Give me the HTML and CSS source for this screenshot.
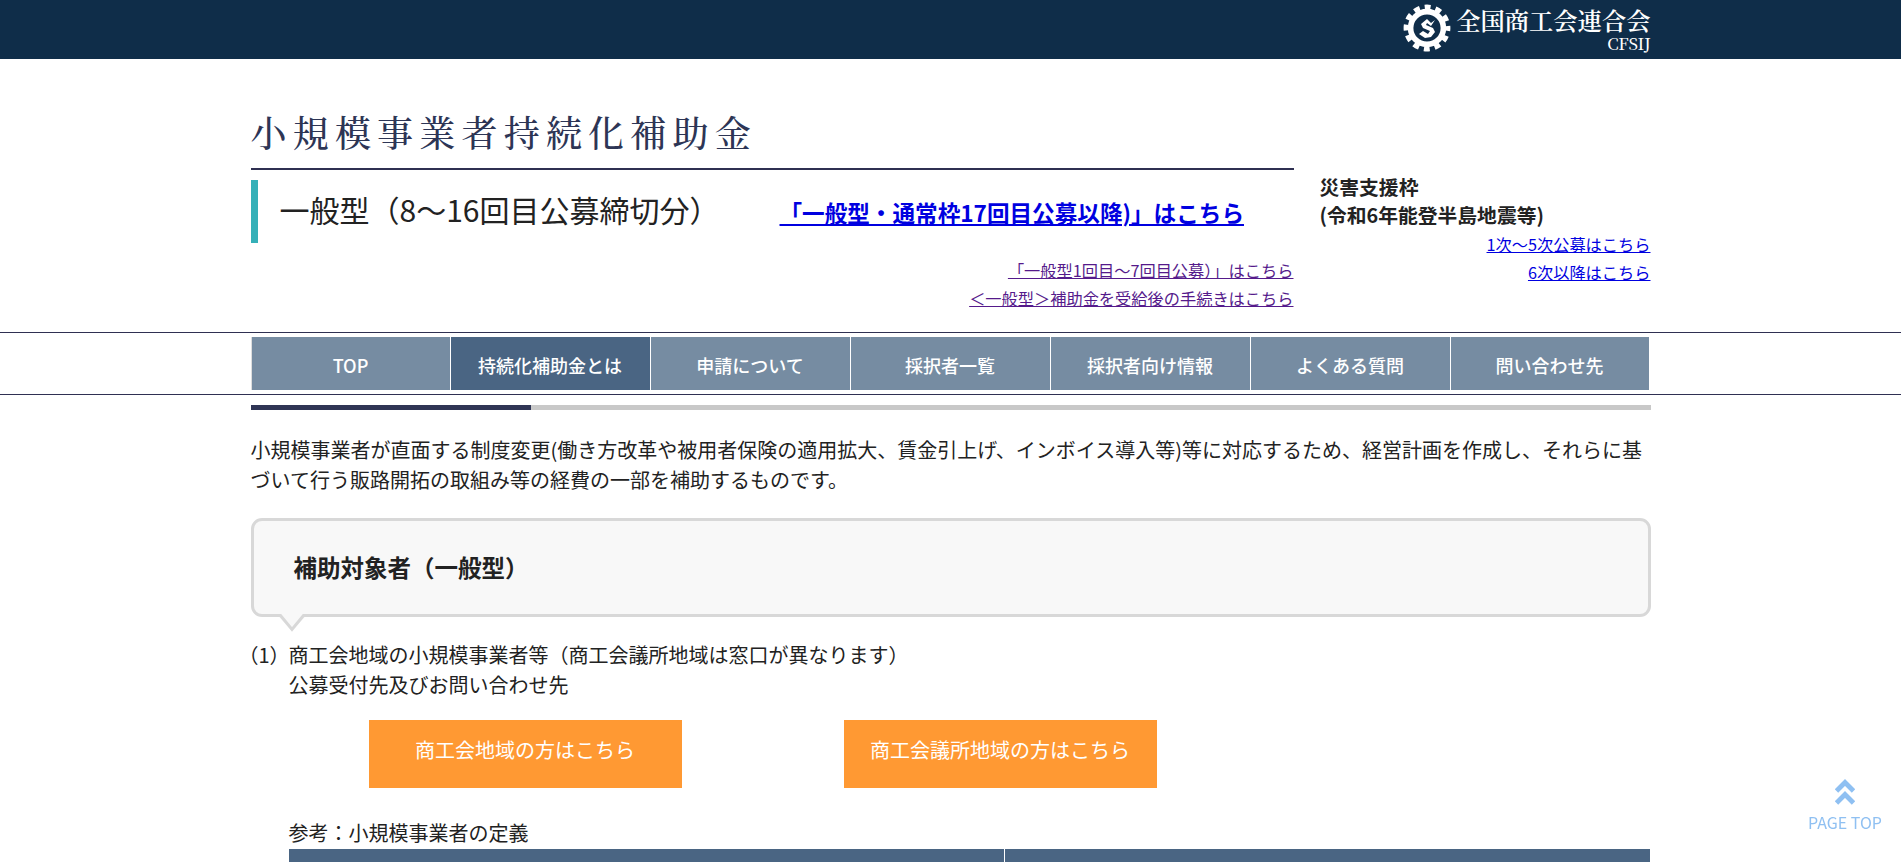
FILE: index.html
```html
<!DOCTYPE html>
<html lang="ja">
<head>
    <meta charset="UTF-8">
    <meta name="viewport" content="width=device-width, initial-scale=1.0">
    <title>小規模事業者持続化補助金</title>
    <link rel="stylesheet" href="styles.css">
</head>
<body>
    <header class="site-header">
        <div class="container header-inner">
            <svg class="logo-mark" viewBox="-24 -24 48 48" width="48" height="48">
                <circle r="16.4" fill="none" stroke="#fff" stroke-width="5.6"/>
                <circle r="21" fill="none" stroke="#fff" stroke-width="4.8" stroke-dasharray="6 4.996" stroke-dashoffset="3"/>
                <path d="M8-8L4-5L0-9L-6-4L-4 0L3 3L1 6L-4 3L-8 6L-2 10L4 9L8 4L6 0L-1-3L0-5L4-2Z" fill="#fff"/>
            </svg>
            <div class="logo-text">
                <span class="logo-name">全国商工会連合会</span>
                <span class="logo-sub">CFSIJ</span>
            </div>
        </div>
    </header>

    <div class="container hero">
        <div class="hero-main">
            <h1 class="site-title">小規模事業者持続化補助金</h1>
            <div class="type-row">
                <h2 class="type-name">一般型（8～16回目公募締切分）</h2>
                <a class="type-link" href="#new">「一般型・通常枠17回目公募以降)」はこちら</a>
            </div>
            <div class="sub-links visited">
                <a href="#old">「一般型1回目～7回目公募）」はこちら</a>
                <a href="#after">＜一般型＞補助金を受給後の手続きはこちら</a>
            </div>
        </div>
        <div class="hero-side">
            <p class="side-title">災害支援枠<br>(令和6年能登半島地震等)</p>
            <div class="sub-links">
                <a href="#first">1次～5次公募はこちら</a>
                <a href="#sixth">6次以降はこちら</a>
            </div>
        </div>
    </div>

    <nav class="global-nav">
        <ul class="container nav-list">
            <li><a href="#top">TOP</a></li>
            <li class="current"><a href="#about">持続化補助金とは</a></li>
            <li><a href="#apply">申請について</a></li>
            <li><a href="#list">採択者一覧</a></li>
            <li><a href="#info">採択者向け情報</a></li>
            <li><a href="#faq">よくある質問</a></li>
            <li><a href="#contact">問い合わせ先</a></li>
        </ul>
    </nav>

    <main class="container main">
        <div class="title-bar"></div>
        <p class="lead">小規模事業者が直面する制度変更(働き方改革や被用者保険の適用拡大、賃金引上げ、インボイス導入等)等に対応するため、経営計画を作成し、それらに基づいて行う販路開拓の取組み等の経費の一部を補助するものです。</p>

        <div class="balloon">
            <h3>補助対象者（一般型）</h3>
            <svg class="balloon-tail" viewBox="0 0 26 18" width="26" height="18">
                <path d="M0 0H26V3L13 17L0 3Z" fill="#f8f8f8"/>
                <path d="M0 1.500H1.500L13 15.500L24.500 1.500H26" fill="none" stroke="#d8d8d8" stroke-width="3"/>
            </svg>
        </div>

        <div class="item">
            <span class="item-no">（1）</span>
            <p>商工会地域の小規模事業者等（商工会議所地域は窓口が異なります）<br>公募受付先及びお問い合わせ先</p>
        </div>

        <div class="buttons">
            <a class="btn" href="#shokokai">商工会地域の方はこちら</a>
            <a class="btn" href="#kaigisho">商工会議所地域の方はこちら</a>
        </div>

        <div class="definition">
            <p>参考：小規模事業者の定義</p>
            <div class="table-head">
                <div></div>
                <div></div>
            </div>
        </div>
    </main>

    <a class="page-top" href="#top">
        <svg viewBox="0 0 20 26" width="20" height="26">
            <path d="M1.500 12L10 3.500L18.500 12M1.500 24L10 15.500L18.500 24" fill="none" stroke="#8fc0f2" stroke-width="4.800"/>
        </svg>
        <span>PAGE TOP</span>
    </a>
</body>
</html>
```
FILE: styles.css
```css
* {
    box-sizing: border-box;
}

body {
    margin: 0;
    height: 862px;
    overflow: hidden;
    font-family: "Noto Sans CJK JP", sans-serif;
    font-size: 20px;
    line-height: 30px;
    color: #222;
    background: #fff;
}

h1, h2, h3, p, ul {
    margin: 0;
    padding: 0;
}

.container {
    width: 1400px;
    margin: 0 auto;
}

/* header */
.site-header {
    height: 59px;
    background: #0f2d49;
}

.header-inner {
    display: flex;
    justify-content: flex-end;
    gap: 5px;
    padding-top: 4px;
}

.logo-text {
    display: flex;
    flex-direction: column;
    align-items: flex-end;
    color: #fff;
    font-family: "Noto Serif CJK JP", "Noto Sans CJK JP", serif;
}

.logo-name {
    margin-top: 1px;
    font-size: 24.3px;
    font-weight: 600;
    line-height: 30px;
}

.logo-sub {
    font-size: 16.5px;
    font-weight: 500;
    line-height: 17px;
    letter-spacing: -0.3px;
}

/* title area */
.hero {
    display: flex;
    justify-content: space-between;
    height: 273px;
}

.hero-main {
    width: 1043px;
    padding-top: 45px;
}

.site-title {
    height: 66px;
    border-bottom: 2px solid #2f3052;
    font-family: "Noto Serif CJK JP", "Noto Sans CJK JP", serif;
    font-size: 36px;
    font-weight: 500;
    line-height: 56px;
    letter-spacing: 6.2px;
    color: #2d3555;
}

.type-row {
    display: flex;
    align-items: center;
    margin-top: 10px;
    height: 63px;
    border-left: 7px solid #35b0b8;
}

.type-name {
    width: 500px;
    margin-left: 22px;
    padding-bottom: 6px;
    font-size: 30px;
    font-weight: 400;
    white-space: nowrap;
}

.type-link {
    font-size: 22.6px;
    font-weight: 700;
    white-space: nowrap;
    color: #0000e0;
    padding-top: 2px;
}

.sub-links {
    display: flex;
    flex-direction: column;
    align-items: flex-end;
    margin-top: 1px;
    font-size: 16.23px;
    line-height: 28px;
}

.sub-links a {
    color: #0000e0;
}

.visited {
    margin-top: 13px;
}

.visited a {
    color: #551a8b;
}

.hero-side {
    width: 331px;
    padding-top: 114px;
}

.side-title {
    font-size: 19.8px;
    font-weight: 700;
    line-height: 28px;
}

/* navigation */
.global-nav {
    border-top: 1px solid #2f3052;
    border-bottom: 1px solid #2f3052;
    padding: 4px 0;
}

.nav-list {
    display: flex;
    list-style: none;
}

.nav-list li {
    width: 200px;
    border-right: 1px solid #fff;
    background: #768ca2;
}

.nav-list li:first-child {
    border-left: 1px solid #ddd;
}

.nav-list li:last-child {
    width: 199px;
}

.nav-list .current {
    background: #4a6583;
}

.nav-list a {
    display: block;
    height: 53px;
    font-size: 18px;
    font-weight: 500;
    line-height: 56px;
    text-align: center;
    text-decoration: none;
    color: #fff;
}

/* contents */
.title-bar {
    height: 5px;
    margin-top: 10px;
    background: linear-gradient(to right, #2f3555 20%, #c8c8c8 20%);
}

.lead {
    margin-top: 25px;
}

.balloon {
    position: relative;
    height: 99px;
    margin-top: 23px;
    padding: 31px 40px;
    border: 3px solid #d8d8d8;
    border-radius: 11px;
    background: #f8f8f8;
}

.balloon h3 {
    font-size: 23.5px;
    font-weight: 700;
}

.balloon-tail {
    position: absolute;
    left: 25px;
    top: 93px;
}

.item {
    display: flex;
    margin-top: 23px;
}

.item-no {
    width: 38px;
    margin-left: -12px;
    margin-right: 12px;
    white-space: nowrap;
}

.buttons {
    display: flex;
    gap: 162px;
    margin: 20px 0 0 118px;
}

.btn {
    width: 313px;
    height: 68px;
    line-height: 60px;
    text-align: center;
    text-decoration: none;
    color: #fff;
    background: #ff9933;
}

.definition {
    margin: 30px 1px 0 38px;
}

.table-head {
    display: flex;
    height: 40px;
    margin-top: 1px;
}

.table-head div {
    background: #4a6583;
    width: 645px;
}

.table-head div:first-child {
    width: 716px;
    border-right: 1px solid #fff;
}

.page-top {
    position: fixed;
    right: 19px;
    bottom: 26px;
    display: flex;
    flex-direction: column;
    align-items: center;
    gap: 3px;
    font-size: 16px;
    line-height: 28px;
    text-decoration: none;
    color: #8fc0f2;
}
```
